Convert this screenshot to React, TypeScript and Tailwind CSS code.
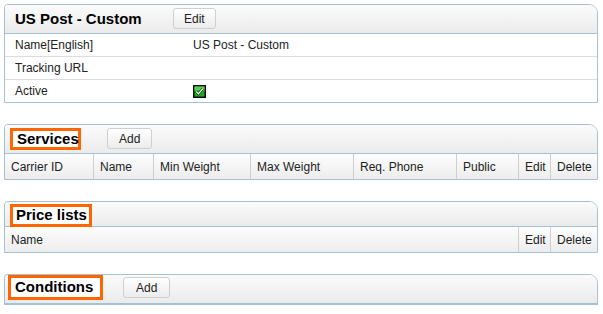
import React from "react";

const font = { fontFamily: '"Liberation Sans", Arial, sans-serif' };

function Btn({ children, px = "px-[10px]" }: { children: React.ReactNode; px?: string }) {
  return (
    <div className={"flex h-[21px] items-center justify-center rounded-[3px] border border-[#cfcfcf] bg-gradient-to-b from-[#ffffff] to-[#ececec] text-[12px] leading-none text-[#222] " + px}>
      {children}
    </div>
  );
}

function Mark({ children, cls }: { children: React.ReactNode; cls: string }) {
  return (
    <div className={"flex items-start border-[3px] border-[#ff6600] bg-white text-[15px] font-bold leading-none text-black " + cls}>
      {children}
    </div>
  );
}

function Check() {
  return (
    <svg width="13" height="13" viewBox="0 0 13 13">
      <rect x="0" y="0" width="13" height="13" fill="#0d0d0d" />
      <rect x="1.5" y="1.5" width="10" height="10" fill="#23a823" />
      <rect x="1.5" y="1.5" width="10" height="4" fill="#58cf58" />
      <path d="M3.2 6.6 L5.4 8.8 L9.8 3.6" stroke="#0b3d0b" strokeWidth="2.6" fill="none" />
      <path d="M3.2 6.6 L5.4 8.8 L9.8 3.6" stroke="#ffffff" strokeWidth="1.3" fill="none" />
    </svg>
  );
}

const panel = "border border-[#a8bfd8] rounded-tl-[4px] rounded-tr-[9px] bg-white overflow-hidden";
const header = "bg-gradient-to-b from-[#fbfbfb] to-[#ebebeb] border-b border-[#a8bfd8]";
const colRow = "flex h-[25px] bg-gradient-to-b from-[#fdfdfd] to-[#ededed] text-[12px] text-[#222]";
const cell = "flex items-center border-l border-[#cfcfcf] pl-[6px]";

export default function App() {
  return (
    <div className="w-[603px] h-[314px] bg-white pl-[4px] pt-[4px]" style={font}>
      <div className="w-[594px] flex flex-col gap-[21px]">
        {/* Panel 1 */}
        <div className={panel}>
          <div className={header + " flex h-[29px] items-center"}>
            <div className="pl-[10px] w-[168px] text-[15px] font-bold text-black">US Post - Custom</div>
            <div className="mt-[-1px]"><Btn>Edit</Btn></div>
          </div>
          {[
            ["Name[English]", "US Post - Custom"],
            ["Tracking URL", ""],
            ["Active", "check"],
          ].map(([l, v], i) => (
            <div
              key={l}
              className={"flex items-center text-[12px] text-[#222] " + (i < 2 ? "h-[23px] border-b border-[#dcdcdc]" : "h-[22px]")}
            >
              <div className="w-[188px] pl-[10px]">{l}</div>
              <div className="flex items-center">{v === "check" ? <Check /> : v}</div>
            </div>
          ))}
        </div>

        {/* Services */}
        <div className={panel}>
          <div className={header + " flex h-[29px] items-start"}>
            <Mark cls="ml-[5px] mt-[3px] h-[22px] pl-[4px] w-[71px]">Services</Mark>
            <div className="ml-[26px] mt-[3px]"><Btn px="px-[11px]">Add</Btn></div>
          </div>
          <div className={colRow}>
            <div className="flex w-[88px] items-center pl-[6px]">Carrier ID</div>
            <div className={cell + " w-[60px]"}>Name</div>
            <div className={cell + " w-[97px]"}>Min Weight</div>
            <div className={cell + " w-[103px]"}>Max Weight</div>
            <div className={cell + " w-[103px]"}>Req. Phone</div>
            <div className={cell + " w-[62px]"}>Public</div>
            <div className={cell + " w-[32px]"}>Edit</div>
            <div className={cell + " flex-1"}>Delete</div>
          </div>
        </div>

        {/* Price lists */}
        <div className={panel}>
          <div className={header + " flex h-[25px] items-start"}>
            <Mark cls="ml-[5px] mt-[2px] h-[23px] pl-[3px] w-[82px]">Price lists</Mark>
          </div>
          <div className={colRow}>
            <div className="flex w-[513px] items-center pl-[6px]">Name</div>
            <div className={cell + " w-[32px]"}>Edit</div>
            <div className={cell + " flex-1"}>Delete</div>
          </div>
        </div>

        {/* Conditions */}
        <div className={panel + " border-b-2"}>
          <div className="flex h-[28px] items-start bg-gradient-to-b from-[#fbfbfb] to-[#ebebeb]">
            <Mark cls="ml-[3px] mt-0 h-[25px] pt-[1px] pl-[4px] w-[95px]">Conditions</Mark>
            <div className="ml-[20px] mt-[2px]"><Btn px="px-[12px]">Add</Btn></div>
          </div>
        </div>
      </div>
    </div>
  );
}
